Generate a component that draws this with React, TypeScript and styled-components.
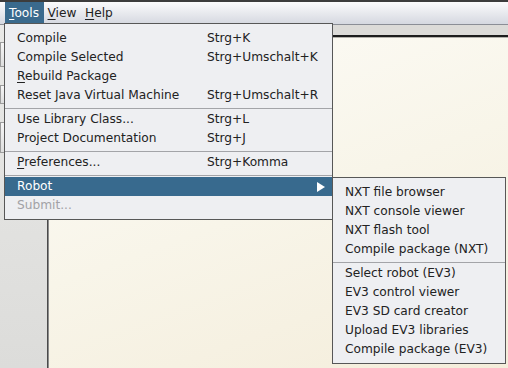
import React from 'react';
import styled, { createGlobalStyle } from 'styled-components';

const GlobalStyle = createGlobalStyle`
  html, body {
    margin: 0;
    padding: 0;
  }
  body {
    font-family: "DejaVu Sans", "Liberation Sans", sans-serif;
    font-size: 12px;
    color: #222;
    overflow: hidden;
  }
`;

const Window = styled.div`
  position: relative;
  width: 508px;
  height: 368px;
  display: flex;
  flex-direction: column;
  overflow: hidden;
`;

const TopEdge = styled.div`
  flex: none;
  height: 2px;
  background: #3c3c3c;
`;

const MenuBar = styled.div`
  flex: none;
  height: 22px;
  display: flex;
  padding-left: 5px;
  font-size: 12.2px;
  background: linear-gradient(#fbfbfc, #d5d8e0);
  border-bottom: 1px solid #8b8e96;
`;

const MenuTitle = styled.div<{ $open?: boolean }>`
  display: flex;
  align-items: center;
  height: 21px;
  padding: 0 4.5px 0 4px;
  background: ${(p) => (p.$open ? '#3a6a8d' : 'transparent')};
  color: ${(p) => (p.$open ? '#fff' : '#222')};
`;

const Key = styled.span`
  text-decoration: underline;
  text-underline-offset: 2px;
`;

const Body = styled.div`
  flex: 1;
  display: flex;
  min-height: 0;
`;

const LeftPanel = styled.div`
  width: 47px;
  flex: none;
  display: flex;
  flex-direction: column;
  padding-top: 17px;
  gap: 18px;
  background: linear-gradient(#e9e9e7, #dcdcda);
  border-right: 1px solid #4a4a4a;
`;

const SideButton = styled.div<{ $h: number }>`
  height: ${(p) => p.$h}px;
  display: flex;
  align-items: center;
  border: 1px solid #9c9c9c;
  background: linear-gradient(#f6f6f6, #dedede);
  color: #222;
  font-size: 11px;
`;

const DiagramColumn = styled.div`
  flex: 1;
  display: flex;
  flex-direction: column;
  border-left: 1px solid #8c8c8c;
`;

const Strip = styled.div`
  flex: none;
  height: 10px;
  background: #dcdbd8;
  border-bottom: 2px solid #1d1d1d;
`;

const Canvas = styled.div`
  flex: 1;
  border-top: 1px solid #b4b2ac;
  background: linear-gradient(160deg, #fdfcf8 0%, #f8f5e9 50%, #f4eddb 100%);
`;

const Menu = styled.div<{ $left: number; $top: number; $width: number }>`
  position: absolute;
  left: ${(p) => p.$left}px;
  top: ${(p) => p.$top}px;
  width: ${(p) => p.$width}px;
  box-sizing: border-box;
  padding: 5px 0 4px;
  font-size: 12.2px;
  background: #eeeff2;
  border: 1px solid #575757;
  display: flex;
  flex-direction: column;
`;

const Item = styled.div<{ $active?: boolean; $disabled?: boolean }>`
  position: relative;
  display: grid;
  grid-template-columns: 190px 1fr;
  height: 19px;
  line-height: 19px;
  padding-left: 12px;
  white-space: nowrap;
  background: ${(p) => (p.$active ? '#386a8e' : 'transparent')};
  color: ${(p) => (p.$active ? '#fff' : p.$disabled ? '#a2a2a6' : '#222')};
`;

const Separator = styled.div`
  height: 1px;
  margin: 3px 0 1px;
  background: #a3a4a8;
`;

const Arrow = styled.svg`
  position: absolute;
  right: 7px;
  top: 5px;
`;

type Entry = { label: React.ReactNode; shortcut?: string } | 'sep';

const toolsEntries: Entry[] = [
  { label: 'Compile', shortcut: 'Strg+K' },
  { label: 'Compile Selected', shortcut: 'Strg+Umschalt+K' },
  { label: <><Key>R</Key>ebuild Package</> },
  { label: 'Reset Java Virtual Machine', shortcut: 'Strg+Umschalt+R' },
  'sep',
  { label: 'Use Library Class...', shortcut: 'Strg+L' },
  { label: 'Project Documentation', shortcut: 'Strg+J' },
  'sep',
  { label: <><Key>P</Key>references...</>, shortcut: 'Strg+Komma' },
  'sep',
];

const robotEntries: Entry[] = [
  { label: 'NXT file browser' },
  { label: 'NXT console viewer' },
  { label: 'NXT flash tool' },
  { label: 'Compile package (NXT)' },
  'sep',
  { label: 'Select robot (EV3)' },
  { label: 'EV3 control viewer' },
  { label: 'EV3 SD card creator' },
  { label: 'Upload EV3 libraries' },
  { label: 'Compile package (EV3)' },
];

const renderEntries = (entries: Entry[]) =>
  entries.map((e, i) =>
    e === 'sep' ? (
      <Separator key={i} />
    ) : (
      <Item key={i}>
        <span>{e.label}</span>
        <span>{e.shortcut}</span>
      </Item>
    )
  );

const App = () => {
  return (
    <Window>
      <GlobalStyle />
      <TopEdge />
      <MenuBar>
        <MenuTitle $open>
          <span><Key>T</Key>ools</span>
        </MenuTitle>
        <MenuTitle>
          <span><Key>V</Key>iew</span>
        </MenuTitle>
        <MenuTitle>
          <span><Key>H</Key>elp</span>
        </MenuTitle>
      </MenuBar>
      <Body>
        <LeftPanel>
          <SideButton $h={23} />
          <SideButton $h={17} />
          <SideButton $h={29} />
        </LeftPanel>
        <DiagramColumn>
          <Strip />
          <Canvas />
        </DiagramColumn>
      </Body>

      <Menu $left={4} $top={23} $width={329}>
        {renderEntries(toolsEntries)}
        <Item $active>
          <span>Robot</span>
          <span />
          <Arrow width="8" height="10" viewBox="0 0 8 10">
            <polygon points="0,0 8,5 0,10" fill="#ffffff" />
          </Arrow>
        </Item>
        <Item $disabled>
          <span>Submit...</span>
          <span />
        </Item>
      </Menu>

      <Menu $left={332} $top={177} $width={174}>
        {renderEntries(robotEntries)}
      </Menu>
    </Window>
  );
};

export default App;
